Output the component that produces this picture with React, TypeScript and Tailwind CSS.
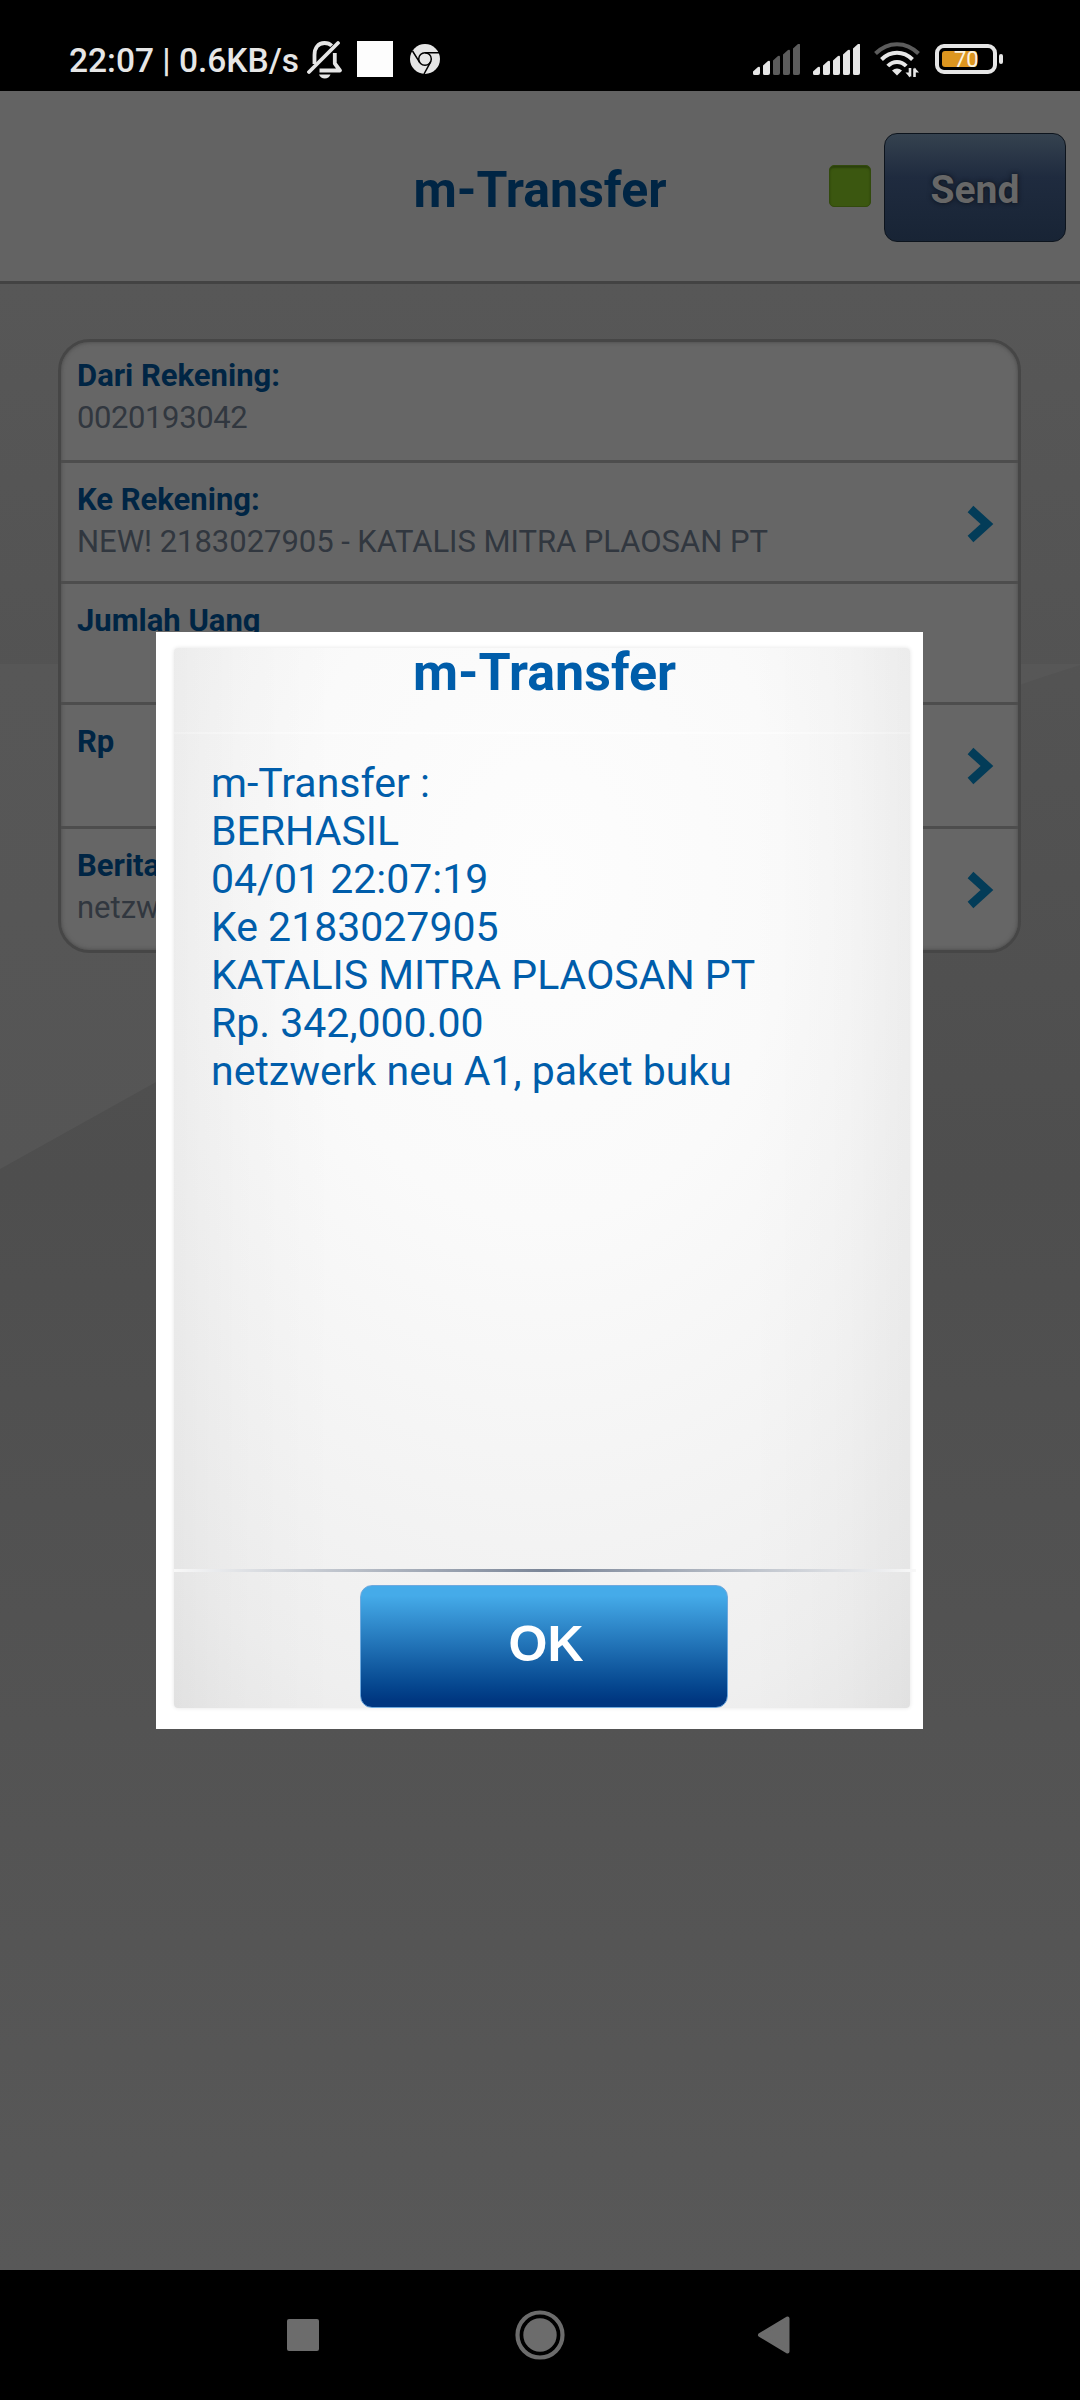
import type { ReactNode } from 'react';
import clsx from 'clsx';

const MESSAGE = [
  'm-Transfer :',
  'BERHASIL',
  '04/01 22:07:19',
  'Ke 2183027905',
  'KATALIS MITRA PLAOSAN PT',
  'Rp. 342,000.00',
  'netzwerk neu A1, paket buku',
];

interface Field {
  label: string;
  value?: string;
  height: string;
  tracking?: string;
  arrow?: boolean;
}

const FIELDS: Field[] = [
  { label: 'Dari Rekening:', value: '0020193042', height: 'h-[121px] pt-[15px]', tracking: 'tracking-[-0.4px]' },
  { label: 'Ke Rekening:', value: 'NEW! 2183027905 - KATALIS MITRA PLAOSAN PT', height: 'h-[121px] pt-[18px]', tracking: 'tracking-[-0.04px]', arrow: true },
  { label: 'Jumlah Uang', height: 'h-[121px] pt-[18px]' },
  { label: 'Rp', height: 'h-[124px] pt-[18px]', arrow: true },
  { label: 'Berita:', value: 'netzwerk', height: 'h-[121px] pt-[18px]', arrow: true },
];

function Signal({ level }: { level: number }) {
  const tops = [23, 17, 12, 6, 0];
  return (
    <svg width="48" height="31" viewBox="0 0 48 31">
      {tops.map((top, i) => (
        <path
          key={top}
          d={`M${i * 10} ${top + 4.5}L${i * 10 + 5} ${top}q2-1 2 1V29q0 2-2 2h-3.500q-1.500 0-1.500-1.500z`}
          fill={i < level ? '#e6e6e6' : '#5c5c5c'}
        />
      ))}
    </svg>
  );
}

function BellOff() {
  return (
    <svg width="36" height="40" viewBox="0 0 36 40" fill="none" stroke="#e6e6e6" strokeWidth="3.800">
      <path d="M7.500 24V15C7.500 8 11 3 17.500 3c3 0 5.500 1 7.200 2.800" />
      <path d="M2 32L31 3" strokeLinecap="round" />
      <path d="M27.800 13V23.500L33 30.500H12.500" strokeLinejoin="round" />
      <path d="M12 34.500H23.500C22.500 37 20.500 38.500 17.800 38.500S13 37 12 34.500Z" fill="#e6e6e6" stroke="none" />
    </svg>
  );
}

function Chrome() {
  return (
    <svg width="30" height="30" viewBox="0 0 30 30">
      <circle cx="15" cy="15" r="15" fill="#e6e6e6" />
      <g fill="none" stroke="#000" strokeWidth="1.500">
        <circle cx="15" cy="15" r="6.300" />
        <path d="M15 8.700H29M9.500 18.200L2.500 7M20.500 18.200L14 30" />
      </g>
    </svg>
  );
}

function Wifi() {
  return (
    <svg width="46" height="36" viewBox="0 0 46 36" fill="none" stroke="#e6e6e6" strokeWidth="4">
      <path d="M1.500 11.500C14-1 32-1 44.500 11.500" stroke="#5c5c5c" />
      <path d="M7.500 17.500C16.500 8.500 29.500 8.500 38.500 17.500" />
      <path d="M13.800 24C19 18.500 27 18.500 32.200 24" />
      <path d="M18 28.500Q23 24.500 28 28.500L23 33.500Z" fill="#e6e6e6" stroke="none" />
      <path d="M36 26V34.500M40.500 35V26.500" stroke="#e6e6e6" strokeWidth="2.600" />
      <path d="M31.500 30.500H36V35.500ZM45 30.500H40.500V25.500Z" fill="#e6e6e6" stroke="none" />
    </svg>
  );
}

function Battery() {
  return (
    <div className="flex items-center gap-[2px]">
      <div className="relative h-[30px] w-[62px] rounded-[9px] border-4 border-[#e6e6e6]">
        <div className="absolute top-[3px] left-[3px] h-4 w-[35px] rounded-[3px] bg-[#dd961f]" />
        <span className="absolute top-[-2px] left-[15px] text-[22px] leading-[28px] text-[#fbf3e0]">70</span>
      </div>
      <div className="h-[10px] w-[4px] rounded-[2px] bg-[#e6e6e6]" />
    </div>
  );
}

function StatusBar() {
  return (
    <div className="flex h-[91px] shrink-0 items-start bg-black text-[#e6e6e6]">
      <span className="mt-[41px] ml-[69px] w-[238px] text-[33.5px] leading-[40px] font-medium whitespace-nowrap">
        22:07 | 0.6KB/s
      </span>
      <div className="mt-[40px]"><BellOff /></div>
      <div className="mt-[41px] ml-[14px] size-9 bg-[#fdfdfd]" />
      <div className="mt-[44px] ml-[17px]"><Chrome /></div>
      <div className="mt-[44px] ml-[313px]"><Signal level={2} /></div>
      <div className="mt-[44px] ml-[12px]"><Signal level={5} /></div>
      <div className="mt-[42px] ml-[13px]"><Wifi /></div>
      <div className="mt-[44px] ml-[15px]"><Battery /></div>
    </div>
  );
}

function Header() {
  return (
    <div className="grid h-[193px] shrink-0 grid-cols-[1fr_auto_1fr] items-center border-b-[3px] border-[#434343] bg-[#636363]">
      <h1 className="col-start-2 mt-[7px] text-[50px] leading-[60px] font-bold text-[#002544]">m-Transfer</h1>
      <div className="mt-[3px] flex items-start justify-end pr-[14px]">
        <div className="mt-[32px] mr-[13px] size-[42px] rounded-[5px] border border-[#324a0d] bg-[#3b5710] shadow-[inset_0_2px_2px_#2b400b]" />
        <button className="h-[109px] w-[182px] rounded-[13px] border border-[#0d141d] bg-linear-to-b from-[#35424f] via-[#1f2b3f] via-40% to-[#182435] pt-[5px] text-[39px] font-bold text-[#676767] [text-shadow:0_0_5px_#0a0f18]">
          Send
        </button>
      </div>
    </div>
  );
}

function FieldRow({ label, value, height, tracking, arrow }: Field) {
  return (
    <div className={clsx('flex border-b-[3px] border-[#4d4d4d] px-4 last:border-b-0', height)}>
      <div className="flex-1 text-[31px] whitespace-nowrap">
        <p className="leading-[38px] font-bold text-[#002544]">{label}</p>
        <p className={clsx('mt-[4px] leading-[38px] text-[#31373f]', tracking)}>{value}</p>
      </div>
      {arrow && (
        <svg className="mt-[24px] mr-[8px]" width="27" height="38" viewBox="0 0 27 38" fill="none">
          <path d="M3.500 4L20 19L3.500 34" stroke="#033c58" strokeWidth="8.500" />
        </svg>
      )}
    </div>
  );
}

function Dialog({ children }: { children: ReactNode }) {
  return (
    <div className="absolute top-[632px] left-[156px] flex h-[1097px] w-[767px] flex-col bg-white px-[18px] pt-[16px] pb-[21px]">
      <div className="flex w-[736px] flex-1 flex-col rounded-[4px] bg-[linear-gradient(to_right,rgba(0,0,0,0.04),rgba(0,0,0,0.015)_9%,transparent_22%,transparent_78%,rgba(0,0,0,0.015)_91%,rgba(0,0,0,0.04)),radial-gradient(ellipse_85%_80%_at_50%_22%,#fdfdfd_0%,#fafafa_40%,#efefef_100%,#e6e6e6_125%)] shadow-[0_0_4px_#e4e4e4]">
        <h2 className="mt-[-5px] h-[89px] pl-[5px] text-center text-[52px] leading-[60px] font-bold text-[#005daa]">
          m-Transfer
        </h2>
        <div className="h-[2px] bg-linear-to-r from-white/20 via-white/90 to-white/20" />
        <div className="h-[835px] pt-[25px] pl-[37px] text-[41px] leading-[48px] text-[#005daa]">{children}</div>
        <div className="mr-[-6px] h-[3px] bg-linear-to-r from-[#f8f8f8] via-[#7a8597] to-[#f8f8f8]" />
        <button className="mt-[13px] ml-[186px] h-[123px] w-[368px] rounded-[12px] border border-[#6fa9de] bg-linear-to-b from-[#45abe9] from-8% to-[#003680] to-95% pb-[5px] pl-[4px] font-['Liberation_Sans',sans-serif] text-[50px] font-bold text-white">
          OK
        </button>
      </div>
    </div>
  );
}

function NavBar() {
  return (
    <div className="flex h-[130px] shrink-0 items-center bg-black">
      <div className="ml-[287px] size-8 rounded-[2px] bg-[#6c6c6c]" />
      <svg className="ml-[196px]" width="50" height="50" viewBox="0 0 50 50">
        <circle cx="25" cy="25" r="22.500" fill="none" stroke="#6c6c6c" strokeWidth="4.200" />
        <circle cx="25" cy="25" r="16.700" fill="#6c6c6c" />
      </svg>
      <svg className="ml-[192px]" width="34" height="38" viewBox="0 0 34 38">
        <path d="M3 19L30.500 2.500V35.500Z" fill="#6c6c6c" stroke="#6c6c6c" strokeWidth="4" strokeLinejoin="round" />
      </svg>
    </div>
  );
}

export default function App() {
  return (
    <div className="relative flex h-[2400px] w-[1080px] flex-col overflow-hidden bg-black font-[Roboto,sans-serif]">
      <StatusBar />
      <Header />
      <div className="relative flex-1 bg-linear-to-b from-[#575757] via-[#4e4e4e] via-45% to-[#585858]">
        <svg className="absolute top-[380px] left-0" width="1080" height="510" viewBox="0 0 1080 510">
          <defs>
            <linearGradient id="hill" x1="0" y1="0" x2="0" y2="1">
              <stop offset="0" stopColor="#575757" />
              <stop offset="1" stopColor="#555555" />
            </linearGradient>
          </defs>
          <path d="M0 0H156L1080 0V1Q700 120 156 418L0 505Z" fill="url(#hill)" />
        </svg>
        <div className="relative mt-[55px] ml-[58px] w-[963px] overflow-hidden rounded-[32px] border-3 border-[#464646] bg-[#666] shadow-[inset_0_0_4px_#484848]">
          {FIELDS.map((field) => (
            <FieldRow key={field.label} {...field} />
          ))}
        </div>
      </div>
      <NavBar />
      <Dialog>
        {MESSAGE.map((line) => (
          <p key={line}>{line}</p>
        ))}
      </Dialog>
    </div>
  );
}
